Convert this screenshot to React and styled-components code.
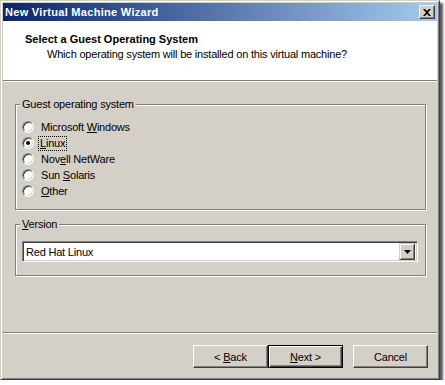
import styled, { createGlobalStyle } from "styled-components";

const Global = createGlobalStyle`
  html, body {
    margin: 0;
    padding: 0;
    background: #fff;
  }
  body {
    font-family: "Liberation Sans", Arial, sans-serif;
    font-size: 11px;
    letter-spacing: -0.2px;
    color: #000;
  }
`;

const Window = styled.div`
  width: 440px;
  height: 380px;
  box-sizing: border-box;
  padding: 2px;
  background: #d4d0c8;
  border: 1px solid;
  border-color: #d4d0c8 #404040 #404040 #d4d0c8;
  box-shadow: inset 1px 1px 0 #fff, inset -1px -1px 0 #808080,
    3px 3px 2px rgba(0, 0, 0, 0.65);
  display: flex;
  flex-direction: column;
`;

const TitleBar = styled.div`
  height: 18px;
  flex: none;
  display: flex;
  align-items: center;
  justify-content: space-between;
  padding: 0 2px 0 2px;
  background: linear-gradient(to right, #0a246a, #a6caf0);
`;

const Title = styled.span`
  color: #fff;
  font-weight: bold;
  font-size: 11px;
  letter-spacing: 0.3px;
`;

const CaptionButton = styled.div`
  width: 16px;
  height: 14px;
  box-sizing: border-box;
  display: flex;
  align-items: center;
  justify-content: center;
  background: #d4d0c8;
  border: 1px solid;
  border-color: #fff #404040 #404040 #fff;
  box-shadow: inset -1px -1px 0 #808080;
`;

const Header = styled.div`
  height: 59px;
  flex: none;
  box-sizing: border-box;
  background: #fff;
  padding: 12px 0 0 22px;
`;

const HeaderTitle = styled.div`
  font-weight: bold;
  letter-spacing: 0;
  line-height: 13px;
`;

const HeaderText = styled.div`
  line-height: 13px;
  margin: 2px 0 0 22px;
`;

const Rule = styled.div`
  flex: none;
  height: 0;
  border-top: 1px solid #808080;
  border-bottom: 1px solid #fff;
`;

const Body = styled.div`
  flex: 1;
  padding: 16px 11px 0 12px;
`;

const Group = styled.fieldset`
  margin: ${(p) => p.$gap || 0}px 0 0;
  padding: 0;
  min-width: 0;
  border: 1px solid #808080;
  box-shadow: 1px 1px 0 #fff, inset 1px 1px 0 #fff;
`;

const Legend = styled.legend`
  margin-left: 4px;
  padding: 0 2px;
  line-height: 13px;
  background: #d4d0c8;
`;

const RadioList = styled.div`
  padding: 8px 0 10px 6px;
`;

const RadioRow = styled.div`
  height: 16px;
  display: flex;
  align-items: center;
  gap: 5px;
`;

const RadioDot = styled.span`
  width: 12px;
  height: 12px;
  box-sizing: border-box;
  border-radius: 50%;
  border: 1px solid;
  border-color: #808080 #fff #fff #808080;
  box-shadow: inset 1px 1px 0 #404040, inset -1px -1px 0 #d4d0c8;
  background: #fff;
  display: flex;
  align-items: center;
  justify-content: center;

  &::after {
    content: "";
    width: 4px;
    height: 4px;
    border-radius: 50%;
    background: ${(p) => (p.$checked ? "#000" : "transparent")};
  }
`;

const RadioLabel = styled.span`
  line-height: 13px;
  padding: 0 1px;
  margin-left: ${(p) => (p.$focus ? 0 : 1)}px;
  outline: ${(p) => (p.$focus ? "1px dotted #000" : "none")};
`;

const VersionBody = styled.div`
  padding: 10px 7px 13px 6px;
`;

const Combo = styled.div`
  height: 21px;
  box-sizing: border-box;
  display: flex;
  align-items: center;
  padding: 2px 2px 2px 3px;
  background: #fff;
  border: 1px solid;
  border-color: #808080 #fff #fff #808080;
  box-shadow: inset 1px 1px 0 #404040, inset -1px -1px 0 #d4d0c8;
`;

const ComboText = styled.span`
  flex: 1;
`;

const ComboButton = styled.div`
  width: 16px;
  height: 17px;
  box-sizing: border-box;
  display: flex;
  align-items: center;
  justify-content: center;
  background: #d4d0c8;
  border: 1px solid;
  border-color: #d4d0c8 #404040 #404040 #d4d0c8;
  box-shadow: inset 1px 1px 0 #fff, inset -1px -1px 0 #808080;
`;

const Footer = styled.div`
  flex: none;
  display: flex;
  justify-content: flex-end;
  padding: 11px 9px 9px 0;
`;

const Button = styled.button`
  width: 75px;
  height: 23px;
  box-sizing: border-box;
  margin: 0 0 0 ${(p) => p.$space || 0}px;
  padding: 0;
  font: inherit;
  letter-spacing: inherit;
  color: #000;
  background: #d4d0c8;
  border: 1px solid;
  border-color: ${(p) => (p.$default ? "#000" : "#fff #404040 #404040 #fff")};
  box-shadow: ${(p) =>
    p.$default
      ? "inset 1px 1px 0 #fff, inset -1px -1px 0 #404040, inset -2px -2px 0 #808080"
      : "inset -1px -1px 0 #808080"};
`;

const options = [
  { label: "Microsoft ", key: "W", rest: "indows" },
  { label: "", key: "L", rest: "inux", checked: true },
  { label: "Nov", key: "e", rest: "ll NetWare" },
  { label: "Sun ", key: "S", rest: "olaris" },
  { label: "", key: "O", rest: "ther" },
];

export default function App() {
  return (
    <>
      <Global />
      <Window>
        <TitleBar>
          <Title>New Virtual Machine Wizard</Title>
          <CaptionButton>
            <svg width="8" height="7" viewBox="0 0 8 7">
              <path d="M0 0h2l2 2 2-2h2L5 3.5 8 7H6L4 5 2 7H0l3-3.5z" fill="#000" />
            </svg>
          </CaptionButton>
        </TitleBar>
        <Header>
          <HeaderTitle>Select a Guest Operating System</HeaderTitle>
          <HeaderText>Which operating system will be installed on this virtual machine?</HeaderText>
        </Header>
        <Rule />
        <Body>
          <Group>
            <Legend>Guest operating system</Legend>
            <RadioList>
              {options.map((o) => (
                <RadioRow key={o.key}>
                  <RadioDot $checked={o.checked} />
                  <RadioLabel $focus={o.checked}>
                    {o.label}
                    <u>{o.key}</u>
                    {o.rest}
                  </RadioLabel>
                </RadioRow>
              ))}
            </RadioList>
          </Group>
          <Group $gap={8}>
            <Legend>
              <u>V</u>ersion
            </Legend>
            <VersionBody>
              <Combo>
                <ComboText>Red Hat Linux</ComboText>
                <ComboButton>
                  <svg width="7" height="4" viewBox="0 0 7 4">
                    <path d="M0 0h7L3.5 4z" fill="#000" />
                  </svg>
                </ComboButton>
              </Combo>
            </VersionBody>
          </Group>
        </Body>
        <Rule />
        <Footer>
          <Button>
            &lt; <u>B</u>ack
          </Button>
          <Button $default>
            <u>N</u>ext &gt;
          </Button>
          <Button $space={10}>Cancel</Button>
        </Footer>
      </Window>
    </>
  );
}
